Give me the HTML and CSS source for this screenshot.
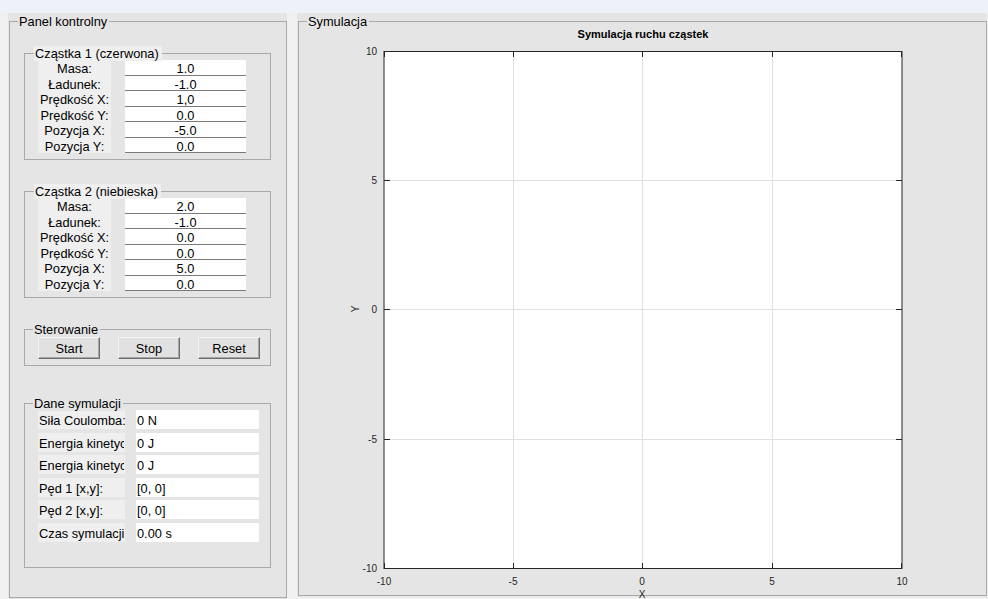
FILE: index.html
```html
<!DOCTYPE html>
<html lang="pl">
<head>
<meta charset="utf-8">
<title>Symulacja ruchu cząstek</title>
<link rel="stylesheet" href="styles.css">
</head>
<body>
<div class="topbar"></div>
<div class="main">
  <section class="panel panel-left">
    <div class="group outer">
      <span class="legend">Panel kontrolny</span>

      <div class="group sub particle">
        <span class="legend light">Cząstka 1 (czerwona)</span>
        <div class="params">
          <span class="lbl">Masa:</span><span class="fld">1.0</span>
          <span class="lbl">Ładunek:</span><span class="fld">-1.0</span>
          <span class="lbl">Prędkość X:</span><span class="fld">1,0</span>
          <span class="lbl">Prędkość Y:</span><span class="fld">0.0</span>
          <span class="lbl">Pozycja X:</span><span class="fld">-5.0</span>
          <span class="lbl">Pozycja Y:</span><span class="fld">0.0</span>
        </div>
      </div>

      <div class="group sub particle">
        <span class="legend light">Cząstka 2 (niebieska)</span>
        <div class="params">
          <span class="lbl">Masa:</span><span class="fld">2.0</span>
          <span class="lbl">Ładunek:</span><span class="fld">-1.0</span>
          <span class="lbl">Prędkość X:</span><span class="fld">0.0</span>
          <span class="lbl">Prędkość Y:</span><span class="fld">0.0</span>
          <span class="lbl">Pozycja X:</span><span class="fld">5.0</span>
          <span class="lbl">Pozycja Y:</span><span class="fld">0.0</span>
        </div>
      </div>

      <div class="group sub control">
        <span class="legend">Sterowanie</span>
        <div class="buttons">
          <button class="btn">Start</button>
          <button class="btn">Stop</button>
          <button class="btn">Reset</button>
        </div>
      </div>

      <div class="group sub data">
        <span class="legend">Dane symulacji</span>
        <div class="datagrid">
          <span class="dlbl">Siła Coulomba:</span><span class="dval">0 N</span>
          <span class="dlbl"><span class="clip">Energia kinetyczna 1:</span></span><span class="dval">0 J</span>
          <span class="dlbl"><span class="clip">Energia kinetyczna 2:</span></span><span class="dval">0 J</span>
          <span class="dlbl">Pęd 1 [x,y]:</span><span class="dval">[0, 0]</span>
          <span class="dlbl">Pęd 2 [x,y]:</span><span class="dval">[0, 0]</span>
          <span class="dlbl"><span class="clip">Czas symulacji:</span></span><span class="dval">0.00 s</span>
        </div>
      </div>
    </div>
  </section>

  <section class="panel panel-right">
    <div class="group outer outer-right">
      <span class="legend">Symulacja</span>
      <svg class="plot" width="687" height="573" viewBox="0 0 687 573">
        <rect x="85" y="29" width="518" height="517" fill="#fff"/>
        <g stroke="#e0e0e0" stroke-width="1">
          <line x1="214.5" y1="30" x2="214.5" y2="546"/>
          <line x1="343.5" y1="30" x2="343.5" y2="546"/>
          <line x1="473.5" y1="30" x2="473.5" y2="546"/>
          <line x1="86" y1="158.5" x2="603" y2="158.5"/>
          <line x1="86" y1="287.5" x2="603" y2="287.5"/>
          <line x1="86" y1="417.5" x2="603" y2="417.5"/>
        </g>
        <g stroke="#262626" stroke-width="1" fill="none">
          <line x1="85" y1="29.5" x2="603" y2="29.5"/>
          <line x1="85" y1="546.5" x2="603" y2="546.5"/>
          <line x1="85" y1="29" x2="85" y2="547"/>
          <line x1="603" y1="29" x2="603" y2="547"/>
          <line x1="85.5" y1="546" x2="85.5" y2="541"/>
          <line x1="214.5" y1="546" x2="214.5" y2="541"/>
          <line x1="343.5" y1="546" x2="343.5" y2="541"/>
          <line x1="473.5" y1="546" x2="473.5" y2="541"/>
          <line x1="602.5" y1="546" x2="602.5" y2="541"/>
          <line x1="85.5" y1="30" x2="85.5" y2="35"/>
          <line x1="214.5" y1="30" x2="214.5" y2="35"/>
          <line x1="343.5" y1="30" x2="343.5" y2="35"/>
          <line x1="473.5" y1="30" x2="473.5" y2="35"/>
          <line x1="602.5" y1="30" x2="602.5" y2="35"/>
          <line x1="85" y1="29.5" x2="91" y2="29.5"/>
          <line x1="85" y1="158.5" x2="91" y2="158.5"/>
          <line x1="85" y1="287.5" x2="91" y2="287.5"/>
          <line x1="85" y1="417.5" x2="91" y2="417.5"/>
          <line x1="85" y1="546.5" x2="91" y2="546.5"/>
          <line x1="597" y1="29.5" x2="603" y2="29.5"/>
          <line x1="597" y1="158.5" x2="603" y2="158.5"/>
          <line x1="597" y1="287.5" x2="603" y2="287.5"/>
          <line x1="597" y1="417.5" x2="603" y2="417.5"/>
          <line x1="597" y1="546.5" x2="603" y2="546.5"/>
        </g>
        <text class="ptitle" x="344" y="16" text-anchor="middle">Symulacja ruchu cząstek</text>
        <g class="tick" text-anchor="end">
          <text x="78" y="33">10</text>
          <text x="78" y="162">5</text>
          <text x="78" y="291">0</text>
          <text x="78" y="421">-5</text>
          <text x="78" y="550">-10</text>
        </g>
        <g class="tick" text-anchor="middle">
          <text x="85" y="563">-10</text>
          <text x="214" y="563">-5</text>
          <text x="343" y="563">0</text>
          <text x="473" y="563">5</text>
          <text x="603" y="563">10</text>
        </g>
        <text class="tick" x="343" y="576" text-anchor="middle">X</text>
        <text class="tick" x="0" y="0" text-anchor="middle" transform="translate(60 287) rotate(-90)">Y</text>
      </svg>
    </div>
  </section>
</div>
</body>
</html>
```

FILE: styles.css
```css
* { box-sizing: border-box; }

html, body {
  margin: 0;
  padding: 0;
}

body {
  width: 988px;
  height: 599px;
  overflow: hidden;
  background: #f0f0f0;
  font-family: "Liberation Sans", Arial, sans-serif;
  font-size: 12.8px;
  color: #000;
}

.topbar {
  height: 12px;
  background: #edf1f9;
}

.main {
  display: flex;
  gap: 10px;
  padding: 1px 0 0 8px;
}

.panel {
  background: #e5e5e5;
  padding: 8px 0 1px 1px;
}

.panel-left {
  width: 279px;
  height: 586px;
}

.panel-right {
  width: 690px;
  height: 584px;
  padding-right: 1px;
}

.group {
  position: relative;
  border: 1px solid #a9a9a9;
}

.legend {
  position: absolute;
  top: -8px;
  left: 8px;
  padding: 0 2px 0 1px;
  line-height: 15px;
  background: #e5e5e5;
  white-space: nowrap;
}

.legend.light {
  background: #efefef;
  left: 9px;
  padding-right: 3px;
}

.outer {
  width: 278px;
  height: 577px;
  padding: 31px 0 0 14px;
}

.outer-right {
  width: 689px;
  height: 575px;
  padding: 0;
}

.sub {
  width: 247px;
  margin-bottom: 31px;
}

.particle {
  height: 107px;
  padding: 6px 0 0 13px;
}

.params {
  display: grid;
  grid-template-columns: 73px 121px;
  grid-auto-rows: 15.5px;
  column-gap: 14px;
}

.lbl {
  background: #efefef;
  text-align: center;
  line-height: 15px;
  padding-top: 1px;
  white-space: nowrap;
}

.fld {
  background: #fff;
  border-bottom: 1px solid #7a7a7a;
  text-align: center;
  line-height: 15px;
  padding-top: 1px;
}

.control {
  height: 37px;
  padding: 7px 0 0 13px;
  margin-bottom: 37px;
}

.buttons {
  display: flex;
  gap: 18px;
}

.btn {
  width: 62px;
  height: 22px;
  margin: 0;
  padding: 1px 0 0;
  font: inherit;
  color: #000;
  background: #e1e1e1;
  border: 1px solid;
  border-color: #f4f4f4 #6e6e6e #6e6e6e #f4f4f4;
  box-shadow: inset -1px -1px 0 #a6a6a6;
}

.data {
  height: 165px;
  padding: 6px 0 0 13px;
}

.datagrid {
  display: grid;
  grid-template-columns: 87px 123px;
  grid-auto-rows: 19px;
  column-gap: 11px;
  row-gap: 3.6px;
}

.dlbl {
  display: flex;
  background: #efefef;
  line-height: 21px;
  padding-left: 1px;
  white-space: nowrap;
  overflow: hidden;
}

.clip {
  display: block;
  max-width: 85px;
  overflow: hidden;
  text-overflow: clip;
}

.dval {
  background: #fff;
  line-height: 21px;
  padding-left: 1px;
  white-space: nowrap;
}

.plot {
  display: block;
  overflow: visible;
}

.ptitle {
  font-family: "Liberation Sans", Arial, sans-serif;
  font-size: 11px;
  font-weight: bold;
  fill: #000;
}

.tick,
.tick text {
  font-family: "Liberation Sans", Arial, sans-serif;
  font-size: 10px;
  fill: #262626;
}
```
